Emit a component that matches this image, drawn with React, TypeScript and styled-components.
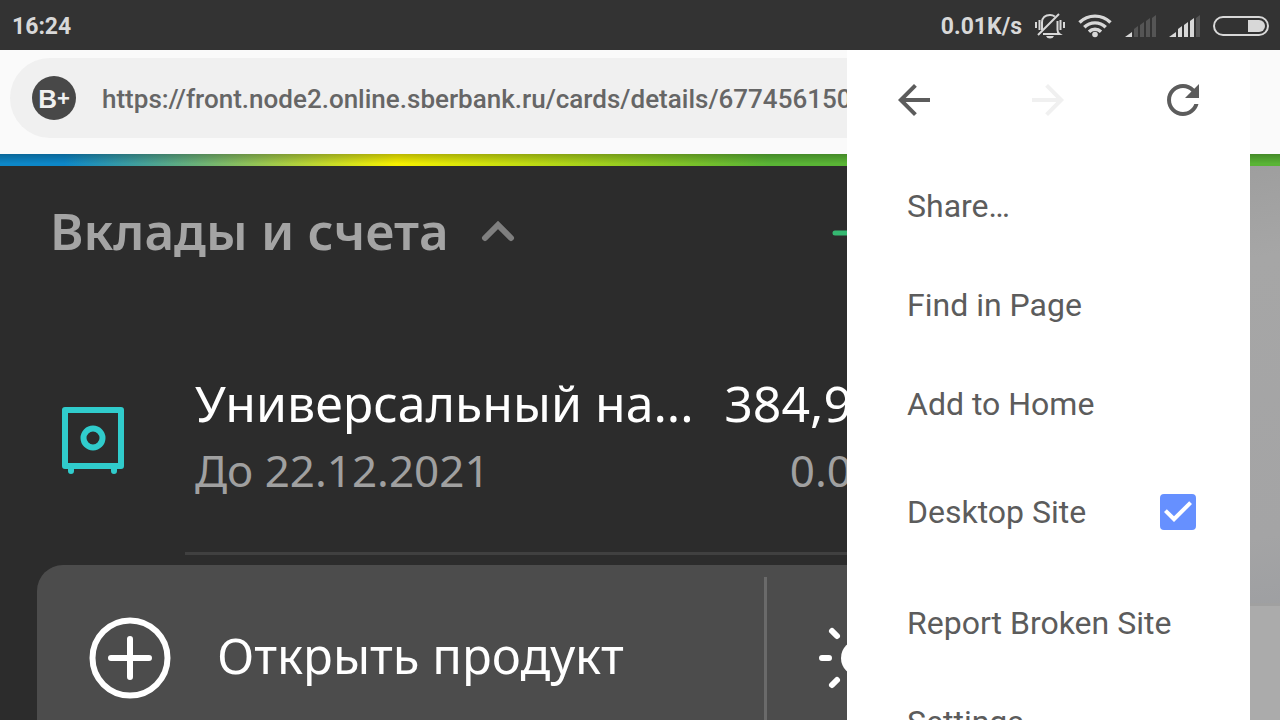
import React from "react";
import styled, { createGlobalStyle } from "styled-components";

const GlobalStyle = createGlobalStyle`
  *, *::before, *::after { box-sizing: border-box; }
  body { margin: 0; background: #2c2c2c; font-family: Roboto, "Liberation Sans", sans-serif; }
  button { font: inherit; color: inherit; background: none; border: 0; padding: 0; text-align: left; cursor: pointer; }
  svg { display: block; flex: none; }
  h2, p { margin: 0; font-size: inherit; font-weight: inherit; }
`;

const Screen = styled.div`
  position: relative;
  display: flex;
  flex-direction: column;
  height: 100vh;
  overflow: hidden;
`;

const StatusBar = styled.header`
  display: flex;
  align-items: center;
  justify-content: space-between;
  flex: none;
  height: 50px;
  padding: 2px 11px 0 12px;
  background: #333333;
  color: #d8d8d8;
  font-size: 23px;
  font-weight: 700;
`;

const StatusIcons = styled.div`
  display: flex;
  align-items: center;
  gap: 13px;
`;

const Toolbar = styled.div`
  flex: none;
  height: 104px;
  padding: 8px 60px 16px 10px;
  background: #fafafa;
`;

const AddressBar = styled.label`
  display: flex;
  align-items: center;
  gap: 26px;
  height: 80px;
  padding: 0 22px;
  border-radius: 40px;
  background: #f0f0f0;
`;

const SiteBadge = styled.span`
  display: flex;
  justify-content: center;
  flex: none;
  width: 44px;
  height: 44px;
  border-radius: 50%;
  background: #484848;
  color: #f0f0f0;
  font-family: "Liberation Sans", sans-serif;
  font-size: 26px;
  font-weight: 700;
  line-height: 46px;

  small { font-size: 22px; }
`;

const AddressInput = styled.input`
  flex: 1;
  min-width: 0;
  padding: 2px 0 0;
  border: 0;
  outline: 0;
  background: transparent;
  color: #666666;
  font-family: Roboto, sans-serif;
  font-size: 26px;
  font-weight: 500;
`;

const RainbowStrip = styled.div`
  flex: none;
  height: 12px;
  background:
    linear-gradient(to bottom, rgba(0, 0, 0, 0.24), rgba(0, 0, 0, 0) 80%),
    linear-gradient(to right, #0d87c8 5%, #f6f000 31%, #59b435 60%);
`;

const PageBody = styled.main`
  display: flex;
  flex: 1;
  min-height: 0;
`;

const Accounts = styled.section`
  display: flex;
  flex-direction: column;
  flex: none;
  width: 70%;
  background: #2c2c2c;
  color: #ffffff;
  font-family: "Noto Sans", sans-serif;
`;

const SectionHeader = styled.div`
  display: flex;
  align-items: center;
  flex: none;
  height: 134px;
  padding: 0 24px 0 50px;
`;

const SectionToggle = styled.button`
  display: flex;
  align-items: center;
  gap: 32px;
  margin-right: auto;
  color: #a4a4a4;
  font-size: 51px;
  font-weight: 600;
  white-space: nowrap;

  h2 { padding-bottom: 6px; }
`;

const AccountRow = styled.div`
  display: flex;
  flex: none;
  height: 252px;
  padding: 70px 44px 0 60px;
`;

const AccountIcon = styled.div`
  width: 135px;
  padding-top: 35px;
`;

const AccountText = styled.div<{ $end?: boolean }>`
  flex: ${(p) => (p.$end ? "none" : "1")};
  text-align: ${(p) => (p.$end ? "right" : "left")};
  white-space: nowrap;
`;

const AccountLine = styled.p<{ $muted?: boolean }>`
  color: ${(p) => (p.$muted ? "#a0a0a0" : "#ffffff")};
  font-size: ${(p) => (p.$muted ? 44 : 50)}px;
  line-height: 67px;
`;

const Divider = styled.hr`
  flex: none;
  width: auto;
  height: 3px;
  margin: 0 0 10px 185px;
  border: 0;
  background: #404040;
`;

const ActionBar = styled.div`
  display: flex;
  flex: 1 0 184px;
  margin-left: 37px;
  padding-top: 12px;
  border-top-left-radius: 26px;
  background: #4c4c4c;
`;

const Action = styled.button<{ $grow?: boolean }>`
  display: flex;
  align-items: center;
  flex: none;
  gap: 46px;
  height: 162px;
  padding-left: 52px;
  font-family: "Noto Sans", sans-serif;
  font-size: 49px;
  white-space: nowrap;
  ${(p) => (p.$grow ? "width: 727px;" : "padding-left: 50px;")}
`;

const ActionLabel = styled.span`
  padding-bottom: 6px;
`;

const ActionSeparator = styled.span`
  flex: none;
  width: 3px;
  background: #6a6a6a;
`;

const Backdrop = styled.div`
  display: flex;
  flex: 1;
  flex-direction: column;
  background: linear-gradient(170deg, #999999, #a6a6a6 25%, #a4a4a5 70%, #95989d);
`;

const BackdropFooter = styled.div`
  height: 117px;
  margin-top: auto;
  border-top: 3px solid #a0a0a0;
  background: #ababab;
`;

const Menu = styled.nav`
  position: absolute;
  top: 50px;
  right: 30px;
  bottom: 0;
  width: 403px;
  overflow: hidden;
  background: #ffffff;
  color: #5c5c5c;
`;

const MenuIcons = styled.div`
  display: grid;
  grid-template-columns: repeat(3, 1fr);
  height: 106px;
  padding-bottom: 6px;
`;

const IconButton = styled.button`
  display: grid;
  place-items: center;
  color: #5c5c5c;

  &:disabled { color: #f0f0f0; }
`;

const MenuItem = styled.button`
  display: block;
  width: 100%;
  height: 99px;
  padding: 0 60px;
  font-size: 32px;
  line-height: 100px;
  white-space: nowrap;
`;

const MenuCheckItem = styled.label`
  display: flex;
  align-items: center;
  justify-content: space-between;
  height: 120px;
  padding: 0 48px 2px 60px;
  font-size: 32px;
  line-height: 40px;
  white-space: nowrap;
`;

const CheckStack = styled.span`
  display: grid;
  place-items: center;

  & > * { grid-area: 1 / 1; }
  svg { pointer-events: none; }
`;

const CheckInput = styled.input`
  appearance: none;
  width: 36px;
  height: 36px;
  margin: 0;
  border: 3px solid #6690ff;
  border-radius: 4px;

  &:checked { background: #6690ff; }
`;

const MaterialIcon = ({ d }: { d: string }) => (
  <svg width="48" height="48" viewBox="0 0 24 24" fill="currentColor" aria-hidden="true">
    <path d={d} />
  </svg>
);

const SilentBell = () => (
  <svg width="30" height="26" viewBox="0 0 30 26" fill="none" stroke="#d8d8d8" strokeWidth="2" aria-hidden="true">
    <path d="M7 17V9.500C7 4.500 10.500 2 15 2c2 0 3.500.5 4.800 1.500M22.500 8v9c0 2 .5 3 2 4H8M24 1 3 22" />
    <path d="M1 9v6M4.500 7v10M25.500 7v10M29 9v6" />
    <path d="M11 23h8q-1 2.500-4 2.500t-4-2.500z" fill="#d8d8d8" stroke="none" />
  </svg>
);

const Wifi = () => (
  <svg width="34" height="24" viewBox="0 0 34 24" fill="none" stroke="#d8d8d8" strokeWidth="3.400" aria-hidden="true">
    <path d="M1.500 8.500a22 22 0 0 1 31 0M6.300 13.300a15.100 15.100 0 0 1 21.400 0M11 17.800a8.500 8.500 0 0 1 12 0" />
    <circle cx="17" cy="20.500" r="2.800" fill="#d8d8d8" stroke="none" />
  </svg>
);

const Signal = ({ bars }: { bars: number }) => {
  const shapes = ["M0 22 7 17V22z", "M9 14l4-3v11H9z", "M15 10l4-3v15h-4z", "M21 6l4-3v19h-4z", "M27 3l4-3v22h-4z"];
  return (
    <svg width="31" height="22" viewBox="0 0 31 22" aria-hidden="true">
      {shapes.map((d, i) => (
        <path key={d} d={d} fill={i < bars ? "#d8d8d8" : "#555555"} />
      ))}
    </svg>
  );
};

const Battery = () => (
  <svg width="56" height="20" viewBox="0 0 56 20" aria-hidden="true">
    <rect x="1" y="1" width="54" height="18" rx="9" fill="none" stroke="#d8d8d8" strokeWidth="2" />
    <path d="M35 4h11a6 6 0 0 1 0 12H35z" fill="#d8d8d8" />
  </svg>
);

export default function App() {
  return (
    <Screen>
      <GlobalStyle />
      <StatusBar>
        <span>16:24</span>
        <StatusIcons>
          <span>0.01K/s</span>
          <SilentBell />
          <Wifi />
          <Signal bars={1} />
          <Signal bars={4} />
          <Battery />
        </StatusIcons>
      </StatusBar>

      <Toolbar>
        <AddressBar>
          <SiteBadge>
            B<small>+</small>
          </SiteBadge>
          <AddressInput
            type="text"
            aria-label="Address"
            defaultValue="https://front.node2.online.sberbank.ru/cards/details/677456150"
          />
        </AddressBar>
      </Toolbar>

      <RainbowStrip />

      <PageBody>
        <Accounts>
          <SectionHeader>
            <SectionToggle type="button">
              <h2>Вклады и счета</h2>
              <svg width="34" height="24" viewBox="0 0 34 24" fill="none" stroke="#7f7f7f" strokeWidth="6" strokeLinecap="round" aria-hidden="true">
                <path d="M4 17 17 4l13 13" />
              </svg>
            </SectionToggle>
            <button type="button" aria-label="+">
              <svg width="40" height="40" viewBox="0 0 40 40" stroke="#35b871" strokeWidth="5" strokeLinecap="round" aria-hidden="true">
                <path d="M3 20h34M20 3v34" />
              </svg>
            </button>
          </SectionHeader>

          <AccountRow>
            <AccountIcon>
              <svg width="66" height="70" viewBox="0 0 66 70" fill="none" stroke="#30cccc" strokeWidth="6" strokeLinecap="round" strokeLinejoin="round" aria-hidden="true">
                <path d="M5 5h56v56H5zM11 62v4M54 62v4" />
                <circle cx="33" cy="33" r="9.500" />
              </svg>
            </AccountIcon>
            <AccountText>
              <AccountLine>Универсальный на...</AccountLine>
              <AccountLine $muted>До 22.12.2021</AccountLine>
            </AccountText>
            <AccountText $end>
              <AccountLine>384,9</AccountLine>
              <AccountLine $muted>0.0</AccountLine>
            </AccountText>
          </AccountRow>
          <Divider />

          <ActionBar>
            <Action type="button" $grow>
              <svg width="82" height="82" viewBox="0 0 82 82" fill="none" stroke="#ffffff" strokeWidth="6" strokeLinecap="round" aria-hidden="true">
                <circle cx="41" cy="41" r="37.500" />
                <path d="M22 41h38M41 22v38" />
              </svg>
              <ActionLabel>Открыть продукт</ActionLabel>
            </Action>
            <ActionSeparator />
            <Action type="button" aria-label="☼">
              <svg width="84" height="84" viewBox="0 0 84 84" stroke="#ffffff" strokeWidth="6" strokeLinecap="round" aria-hidden="true">
                <circle cx="42" cy="42" r="18" fill="#ffffff" stroke="none" />
                <path d="M5 42h7M72 42h7M42 5v7M42 72v7M15 15l5 5M64 64l5 5M15 69l5-5M64 20l5-5" />
              </svg>
            </Action>
          </ActionBar>
        </Accounts>
        <Backdrop>
          <BackdropFooter />
        </Backdrop>
      </PageBody>

      <Menu>
        <MenuIcons>
          <IconButton type="button" aria-label="←">
            <MaterialIcon d="M20 11H7.830l5.590-5.590L12 4l-8 8 8 8 1.410-1.410L7.830 13H20v-2z" />
          </IconButton>
          <IconButton type="button" aria-label="→" disabled>
            <MaterialIcon d="M12 4l-1.410 1.410L16.170 11H4v2h12.170l-5.580 5.590L12 20l8-8z" />
          </IconButton>
          <IconButton type="button" aria-label="↻">
            <MaterialIcon d="M17.650 6.350C16.200 4.900 14.210 4 12 4c-4.420 0-7.990 3.580-7.990 8s3.570 8 7.990 8c3.730 0 6.840-2.550 7.730-6h-2.080c-.82 2.330-3.040 4-5.650 4-3.310 0-6-2.690-6-6s2.690-6 6-6c1.660 0 3.140.69 4.220 1.780L13 11h7V4l-2.350 2.350z" />
          </IconButton>
        </MenuIcons>
        <MenuItem type="button">Share…</MenuItem>
        <MenuItem type="button">Find in Page</MenuItem>
        <MenuItem type="button">Add to Home</MenuItem>
        <MenuCheckItem>
          Desktop Site
          <CheckStack>
            <CheckInput type="checkbox" defaultChecked />
            <svg width="48" height="48" viewBox="0 0 24 24" fill="#ffffff" aria-hidden="true">
              <path d="M10 17l-5-5 1.410-1.410L10 14.170l7.590-7.590L19 8z" />
            </svg>
          </CheckStack>
        </MenuCheckItem>
        <MenuItem type="button">Report Broken Site</MenuItem>
        <MenuItem type="button">Settings</MenuItem>
      </Menu>
    </Screen>
  );
}
